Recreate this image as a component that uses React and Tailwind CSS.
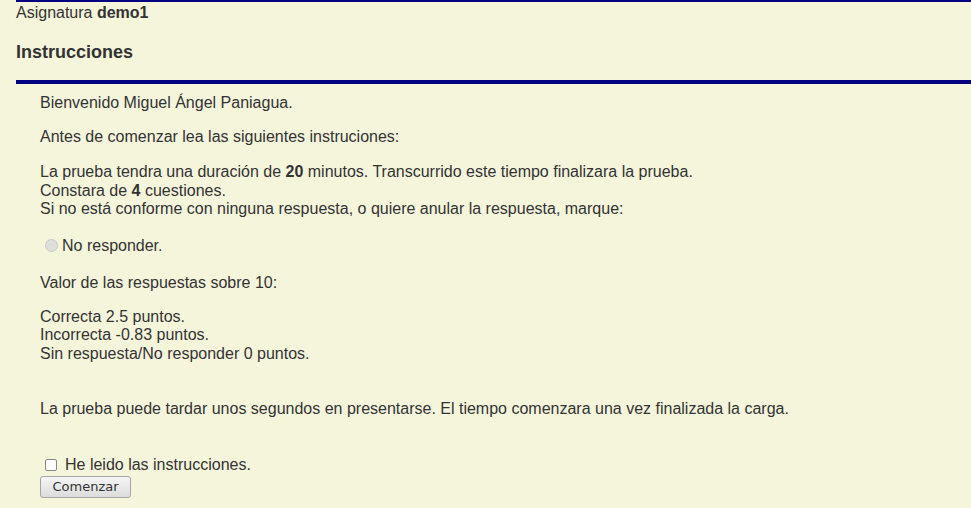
import React from "react";

export default function App() {
  return (
    <div className="min-h-[508px] bg-[#f5f5dc] text-[#333] font-['Liberation_Sans',Arial,sans-serif]">
      <div className="ml-4 border-t-2 border-[#000080] pt-[2px] text-[16px] leading-[17px]">
        Asignatura <b>demo1</b>
      </div>
      <h2 className="ml-4 mt-[20px] text-[18px] leading-[22px] font-bold">Instrucciones</h2>
      <div className="ml-4 mt-[17px] h-[4px] bg-[#000080]" />
      <div className="pl-10 pt-[10px] text-[16px] leading-[18px]">
        <p>Bienvenido Miguel Ángel Paniagua.</p>
        <p className="mt-[16px]">Antes de comenzar lea las siguientes instruciones:</p>
        <p className="mt-[17px] leading-[18.5px]">
          La prueba tendra una duración de <b>20</b> minutos. Transcurrido este tiempo finalizara la prueba.
          <br />
          Constara de <b>4</b> cuestiones.
          <br />
          Si no está conforme con ninguna respuesta, o quiere anular la respuesta, marque:
        </p>
        <label className="mt-[18px] flex items-center gap-[4px] pl-[5px]">
          <span className="inline-block h-[13px] w-[13px] rounded-full border border-[#c8c8c8] bg-[#dedede]" />
          No responder.
        </label>
        <p className="mt-[19px]">Valor de las respuestas sobre 10:</p>
        <p className="mt-[16px] leading-[18.5px]">
          Correcta 2.5 puntos.
          <br />
          Incorrecta -0.83 puntos.
          <br />
          Sin respuesta/No responder 0 puntos.
        </p>
        <p className="mt-[37px]">
          La prueba puede tardar unos segundos en presentarse. El tiempo comenzara una vez finalizada la carga.
        </p>
        <label className="mt-[38px] flex items-center gap-[8px] pl-[5px]">
          <span className="inline-block h-[12px] w-[12px] rounded-[2px] border border-[#888] bg-white" />
          He leido las instrucciones.
        </label>
        <button className="mt-[2px] h-[22px] w-[91px] rounded-[3px] border border-[#a6a6a6] bg-gradient-to-b from-[#f6f6f6] to-[#dcdcdc] font-['DejaVu_Sans',sans-serif] text-[13px] leading-[20px] text-[#333]">
          Comenzar
        </button>
      </div>
    </div>
  );
}
